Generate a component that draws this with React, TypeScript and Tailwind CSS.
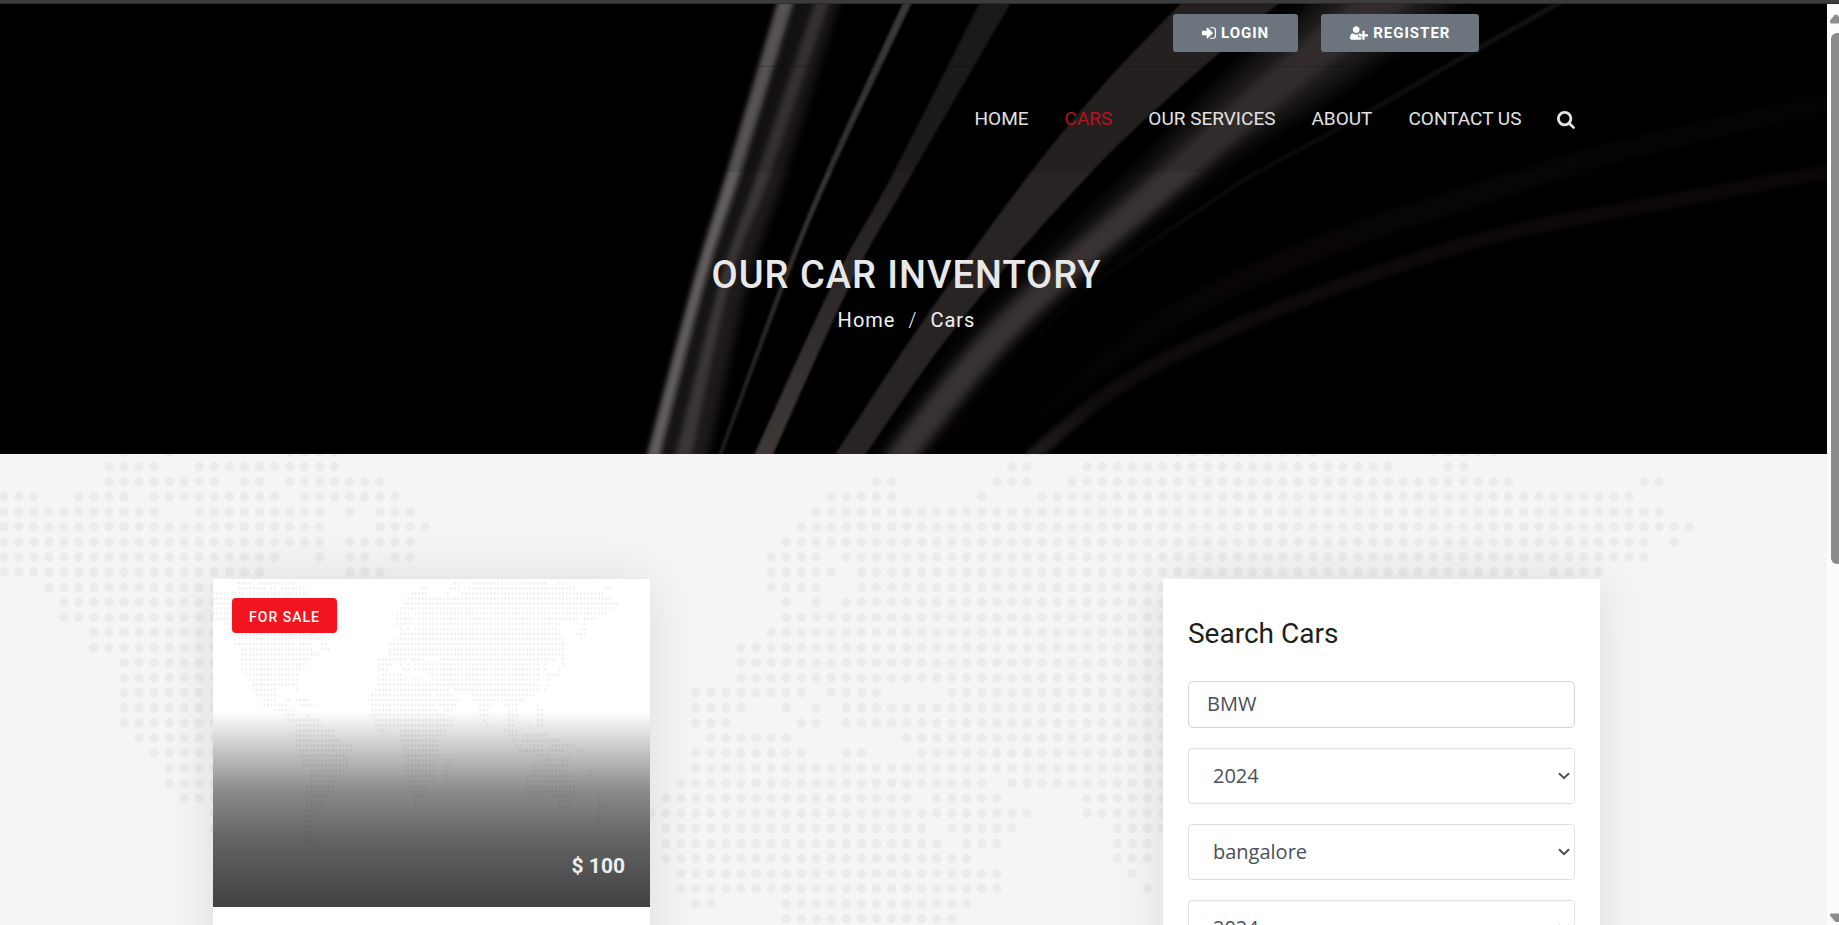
import React from "react";

/* Land cells of the dotted world map: one entry per row, "from-to" column ranges. */
const LAND_ROWS: string[] = [
  "8 11 19-22 68-69 78-87 95-99",
  "7-10 13-22 67-68 72-92 96-97",
  "7-14 16-17 19-25 58-59 66-68 71-100 109-110",
  "0-2 5-8 10-18 20-26 55-59 65 69-108",
  "0-10 13-21 23 25-27 54-110",
  "0-21 25-28 53-112",
  "0-21 23-27 52-109 111",
  "0-18 21 23-24 26-27 51-54 56-109",
  "0-17 23-25 51-55 57-101 103-106",
  "3-18 22-25 51-54 57-96 103",
  "4-19 22-27 52 54 56-95 102-103",
  "4-22 24-28 52-96 101-103",
  "6-22 24-30 51-97 102",
  "6-22 24-27 30-31 49-97",
  "8-27 30-32 49-97",
  "8-29 49-97",
  "8-26 46-53 55-58 63-95 97",
  "8-25 46-49 52 54 56-90 92 97",
  "8-24 46-48 53-54 56-90 92 96",
  "9-23 47-52 60-90 93-96",
  "10-23 46-53 56-57 61-90 93",
  "11-23 46-90 93",
  "11-17 23 45-65 67-90 92",
  "12-17 44-60 62-66 72-89",
  "14-17 20-21 23-26 43-68 72-86",
  "14-20 24-28 44-61 63-67 74-77 81-84 90",
  "17-22 44-62 64-66 74-76 82-84 90-91",
  "20-22 26 44-64 74-76 82-84 90-91",
  "21-29 45-66 75 82-83 90-91",
  "23-30 45-66 76 82-83 88 90-91",
  "23-33 46-47 52-64 81-84",
  "23-33 52-63 82-84 86-92",
  "23-35 52-62 83-84 86-96",
  "23-38 53-62 84-85 89-91 94-100",
  "24-38 53-62 85-91 93-97 101-102",
  "24-37 53-62 90-91 93 99",
  "25-37 54-62 65-66 91-94 97-98",
  "25-37 53-61 64-65 89-98",
  "27-36 53-61 64-65 89-98 104-105",
  "27-36 54-61 64-65 87-100 104-105",
  "27-34 54-61 65 87-100",
  "26-33 54-59 87-100",
  "26-33 55-59 88-100",
  "26-31 56-58 88-90 94-100 107",
  "26-31 56-57 96-99 107-108",
  "26-30 56 96-99 107-109",
  "25-29 56 98 107-108",
  "25-28 106-107",
  "25-27 106-107",
  "25-27",
  "25-26",
  "25-27",
  "26-28",
  "28",
];

const DOT_PATH = LAND_ROWS.map((row, r) =>
  row
    .split(" ")
    .map((range) => {
      const [from, to = from] = range.split("-").map(Number);
      let d = "";
      for (let c = from; c <= to; c++) {
        const x = (3.6 + c * 15.05 - 4.7).toFixed(1);
        const y = (-2.4 + r * 15.07).toFixed(1);
        d += `M${x} ${y}a4.7 4.7 0 1 0 9.4 0a4.7 4.7 0 1 0-9.4 0z`;
      }
      return d;
    })
    .join(""),
).join("");

function DotMap({ className, stretch }: { className: string; stretch?: boolean }) {
  return (
    <svg
      aria-hidden="true"
      viewBox="0 0 1827 975"
      preserveAspectRatio={stretch ? "none" : "xMidYMin meet"}
      className={className}
    >
      <path d={DOT_PATH} fill="currentColor" />
    </svg>
  );
}

type Point = [number, number];

/* Smooth curve segments through the points (Catmull-Rom turned into cubic Béziers). */
function curve(pts: Point[]): string {
  let d = `${pts[0][0]} ${pts[0][1]}`;
  for (let i = 0; i < pts.length - 1; i++) {
    const p0 = pts[i - 1] ?? pts[i];
    const p1 = pts[i];
    const p2 = pts[i + 1];
    const p3 = pts[i + 2] ?? p2;
    d += `C${p1[0] + (p2[0] - p0[0]) / 6} ${p1[1] + (p2[1] - p0[1]) / 6} ${p2[0] - (p3[0] - p1[0]) / 6} ${p2[1] - (p3[1] - p1[1]) / 6} ${p2[0]} ${p2[1]}`;
  }
  return d;
}

/* Closed band given as [y, left, right] stations from top to bottom. */
function band(stations: [number, number, number][]): string {
  const left = stations.map(([y, l]): Point => [l, y]);
  const right = stations.map(([y, , r]): Point => [r, y]).reverse();
  return `M${curve(left)}L${curve(right)}Z`;
}

function Blur({ id, amount }: { id: string; amount: number }) {
  return (
    <filter id={id} x="-20%" y="-10%" width="140%" height="120%" colorInterpolationFilters="sRGB">
      <feGaussianBlur stdDeviation={amount} />
    </filter>
  );
}

function HeroBeams() {
  return (
    <svg
      aria-hidden="true"
      viewBox="0 0 1827 450"
      preserveAspectRatio="xMidYMid slice"
      className="absolute inset-0 h-full w-full"
    >
      <defs>
        <Blur id="b1" amount={1.2} />
        <Blur id="b2" amount={2.5} />
        <Blur id="b4" amount={5} />
        <Blur id="b9" amount={10} />
        <linearGradient id="gd" x1="0" y1="0" x2="0" y2="1">
          <stop offset="0" stopColor="#1c1c1a" />
          <stop offset=".4" stopColor="#231f1e" />
          <stop offset="1" stopColor="#3f3938" />
        </linearGradient>
        <linearGradient id="gc" x1="0" y1="0" x2="0" y2="1">
          <stop offset="0" stopColor="#44403c" />
          <stop offset=".5" stopColor="#32322f" />
          <stop offset="1" stopColor="#1c1c1b" />
        </linearGradient>
        <linearGradient id="gg" x1="0" y1="1" x2="1" y2="0">
          <stop offset="0" stopColor="#000000" />
          <stop offset=".6" stopColor="#0d0d0d" />
          <stop offset="1" stopColor="#171616" />
        </linearGradient>
        <linearGradient id="gh" x1="0" y1="1" x2="1" y2="0">
          <stop offset="0" stopColor="#020101" />
          <stop offset=".4" stopColor="#0a0607" />
          <stop offset="1" stopColor="#060506" />
        </linearGradient>
        <linearGradient id="gi" x1="0" y1="1" x2="1" y2="0">
          <stop offset="0" stopColor="#211d1d" />
          <stop offset=".15" stopColor="#100c0d" />
          <stop offset="1" stopColor="#0b0709" />
        </linearGradient>
      </defs>
      {/* left pair with the dark panel between them */}
      <path d={band([[-10, 790, 825], [168, 740, 766], [279, 704, 726], [460, 656, 684]])} fill="#151514" filter="url(#b1)" />
      <path d={band([[-10, 815, 842], [168, 758, 786], [279, 720, 748], [460, 671, 706]])} fill="#1d1a19" filter="url(#b4)" />
      <path d={band([[-10, 818, 832], [168, 758, 771], [279, 720, 730], [460, 674, 690]])} fill="#3b3635" filter="url(#b2)" />
      <path d={band([[-10, 780, 796], [168, 727, 741], [279, 693, 705], [460, 645, 658]])} fill="#625d5c" filter="url(#b2)" />
      {/* thin streak */}
      <path d={band([[-10, 907, 916], [168, 826, 832], [279, 781, 786], [460, 715, 719]])} fill="url(#gc)" filter="url(#b1)" />
      {/* narrow band */}
      <path d={band([[-10, 984, 1016], [168, 894, 913], [279, 833, 851], [460, 750, 769]])} fill="url(#gd)" filter="url(#b1)" />
      {/* wide band */}
      <path
        d={band([[-10, 1190, 1290], [80, 1104, 1184], [176, 1025, 1084], [323, 919, 956], [460, 829, 859]])}
        fill="#282423"
        filter="url(#b1)"
      />
      {/* soft wide highlight */}
      <path
        d={band([[-15, 1330, 1470], [80, 1224, 1340], [176, 1132, 1196], [323, 984, 1026], [460, 880, 910]])}
        fill="#211e1d"
        filter="url(#b9)"
      />
      <path
        d={band([[-15, 1365, 1430], [80, 1254, 1304], [176, 1150, 1190], [323, 990, 1024], [460, 880, 910]])}
        fill="#383332"
        filter="url(#b4)"
      />
      {/* faint arcs on the right */}
      <path
        d={`M${curve([[1575, -10], [1446, 63], [1358, 114], [1258, 168], [1214, 196], [1074, 296], [980, 400]])}`}
        fill="none"
        stroke="url(#gg)"
        strokeWidth="5"
        filter="url(#b1)"
      />
      <path
        d={`M${curve([[1840, 96], [1599, 152], [1491, 186], [1350, 232], [1210, 292], [1114, 352], [1027, 422]])}`}
        fill="none"
        stroke="url(#gh)"
        strokeWidth="22"
        filter="url(#b4)"
      />
      <path
        d={`M${curve([[1840, 165], [1671, 197], [1511, 228], [1370, 271], [1210, 334], [1110, 388], [1028, 456]])}`}
        fill="none"
        stroke="url(#gi)"
        strokeWidth="14"
        filter="url(#b2)"
      />
    </svg>
  );
}

function SignInIcon() {
  return (
    <svg aria-hidden="true" viewBox="0 0 1536 1280" className="h-3 w-3.5 fill-current">
      <path d="M1184 640q0 26-19 45L621 1229q-19 19-45 19t-45-19-19-45V896H64q-26 0-45-19T0 832V448q0-26 19-45t45-19h448V96q0-26 19-45t45-19 45 19l544 544q19 19 19 45zm352-352v704q0 119-84.500 203.500T1248 1280H928q-13 0-22.500-9.500T896 1248q0-4-1-20t-.5-26.500 3-23.500 10-19.500 20.500-6.500h320q66 0 113-47t47-113V288q0-66-47-113t-113-47H936l-11.500-1-11.500-3-8-5.500-7-9-2-13.500q0-4-1-20t-.5-26.500 3-23.500 10-19.500T928 0h320q119 0 203.500 84.500T1536 288z" />
    </svg>
  );
}

function UserPlusIcon() {
  return (
    <svg aria-hidden="true" viewBox="0 0 2048 1536" className="h-3.5 w-[18px] fill-current">
      <path d="M704 768q-159 0-271.500-112.500T320 384t112.500-271.500T704 0t271.500 112.500T1088 384 975.500 655.500 704 768zm960 128h352q13 0 22.500 9.500t9.500 22.500v192q0 13-9.500 22.500t-22.500 9.500h-352v352q0 13-9.500 22.500t-22.500 9.500h-192q-13 0-22.500-9.500t-9.500-22.500v-352h-352q-13 0-22.500-9.500T1024 1120V928q0-13 9.500-22.500T1056 896h352V544q0-13 9.500-22.500t22.500-9.500h192q13 0 22.500 9.500t9.500 22.500v352zm-736 224q0 52 38 90t90 38h256v238q-68 50-171 50H267q-121 0-194-69T0 1376q0-53 3.500-103.500t14-109T44 1055t43-97.500 62-81 85.500-53.500T346 803q19 0 39 17 79 61 154.500 91.500T704 942t164.500-30.500T1023 820q20-17 39-17 132 0 217 96h-223q-52 0-90 38t-38 90v192z" />
    </svg>
  );
}

function SearchIcon() {
  return (
    <svg aria-hidden="true" viewBox="0 0 1664 1664" className="h-[18px] w-[18px] fill-current">
      <path d="M1152 704q0-185-131.500-316.500T704 256 387.500 387.500 256 704t131.500 316.500T704 1152t316.500-131.500T1152 704zm512 832q0 52-38 90t-90 38q-54 0-90-38l-343-342q-179 124-399 124-143 0-273.500-55.500t-225-150-150-225T0 704t55.500-273.500 150-225 225-150T704 0t273.500 55.500 225 150 150 225T1408 704q0 220-124 399l343 343q37 37 37 90z" />
    </svg>
  );
}

const NAV = ["Home", "Cars", "Our Services", "About", "Contact Us"];

function Header() {
  const btn =
    "flex h-[38px] items-center gap-[5px] rounded-[3px] bg-[#6c757d] px-[29px] text-[15px] font-bold tracking-[1px] text-white uppercase";
  return (
    <header className="relative bg-black/10">
      <div className="border-b border-black/20 pr-[14px]">
        <div className="mx-auto flex h-[62px] w-[76%] items-start justify-end gap-[23px] pt-[10px] pr-[116px]">
          <button type="button" className={btn}><SignInIcon />Login</button>
          <button type="button" className={btn}><UserPlusIcon />Register</button>
        </div>
      </div>
      <div className="pr-[14px]">
        <nav className="mx-auto flex h-[105px] w-[76%] items-center justify-end gap-9 pr-5 text-[19px] text-[#e2e2e2] uppercase">
          {NAV.map((item) => (
            <a key={item} href="#" className={item === "Cars" ? "text-[#b8131c]" : ""}>{item}</a>
          ))}
          <button type="button" aria-label="Search"><SearchIcon /></button>
        </nav>
      </div>
    </header>
  );
}

function CarCard() {
  return (
    <article className="bg-white shadow-[0_0_50px_rgba(0,0,0,0.1)]">
      <div className="relative h-[328px]">
        <DotMap stretch className="absolute inset-0 h-full w-full text-[#f1f1f2]" />
        <div className="absolute inset-x-0 bottom-0 h-[196px] bg-[linear-gradient(to_bottom,rgba(0,0,0,0)_0%,rgba(0,0,0,0.46)_41%,rgba(0,0,0,0.61)_66%,rgba(4,0,2,0.75)_100%)]" />
        <span className="absolute top-[19px] left-[19px] flex h-[35px] items-center rounded-[4px] bg-[#f41420] px-[17px] pt-[3px] text-[14px] font-medium tracking-[1px] text-white uppercase">
          For sale
        </span>
        <span className="absolute right-[25px] bottom-[27px] text-[21px] leading-7 font-bold text-[#eeeeee]">$ 100</span>
      </div>
      <div className="h-40" />
    </article>
  );
}

function SelectField({ label, value }: { label: string; value: string }) {
  return (
    <div className="relative">
      <select
        aria-label={label}
        defaultValue={value}
        className="block h-14 w-full appearance-none rounded-[4px] border border-[#dfe0e2] bg-white pr-8 pl-6 text-[20px] text-[#495057]"
      >
        <option>{value}</option>
      </select>
      <svg
        aria-hidden="true"
        viewBox="0 0 12 8"
        className="pointer-events-none absolute top-6 right-[5px] h-2 w-3 fill-none stroke-[#495057] stroke-2"
      >
        <path d="M1 1.200L6 6.200L11 1.200" />
      </svg>
    </div>
  );
}

function SearchCard() {
  return (
    <aside className="col-start-3 bg-white px-[25px] pt-[37px] shadow-[0_0_50px_rgba(0,0,0,0.1)]">
      <h2 className="text-[28px] leading-9 text-[#1d1f21]">Search Cars</h2>
      <form className="mt-[29px] flex flex-col gap-5 pb-8 font-['Open_Sans',sans-serif]">
        <input
          type="text"
          aria-label="Car brand"
          defaultValue="BMW"
          className="h-[47px] w-full rounded-[5px] border border-[#ced4da] bg-white px-[18px] pb-[2px] text-[20px] text-[#495057]"
        />
        <SelectField label="Year" value="2024" />
        <SelectField label="City" value="bangalore" />
        <SelectField label="Model" value="2024" />
      </form>
    </aside>
  );
}

function Scrollbar() {
  return (
    <div aria-hidden="true" className="flex w-3 shrink-0 flex-col items-end overflow-hidden bg-[#fcfcfc]">
      <svg viewBox="0 0 9 10" className="mt-[10px] h-[10px] w-[9px] fill-[#8b8b8b]">
        <path d="M0 8Q0 7 .5 6L4.500 1Q6 0 7.500 1L9 3V9.500H1Q0 9.500 0 8Z" />
      </svg>
      <div className="mt-[9px] h-[531px] w-2 rounded-l-[6px] bg-[#8b8b8b]" />
      <svg viewBox="0 0 9 10" className="mt-auto mb-[2px] h-[10px] w-[9px] fill-[#8b8b8b]">
        <path d="M0 1.500Q0 .5 1 .5H9V9H6.500Q5.500 9 4.500 8L.5 3Q0 2.500 0 1.500Z" />
      </svg>
    </div>
  );
}

export default function App() {
  return (
    <div className="flex h-screen flex-col overflow-hidden font-[Roboto,sans-serif]">
      <div className="h-1 shrink-0 border-b border-[#2b2b2b] bg-[#3c3c3c]" />
      <div className="flex min-h-0 flex-1">
        <main className="flex min-w-0 flex-1 flex-col overflow-hidden">
          <section className="relative h-[450px] shrink-0 overflow-hidden bg-black">
            <HeroBeams />
            <Header />
            <div className="relative pt-[81px] pr-[14px] text-center">
              <h1 className="text-[38px] leading-[44px] font-medium tracking-[1px] text-[#e8e8e8] uppercase">
                Our Car Inventory
              </h1>
              <p className="mt-[11px] flex justify-center gap-[13px] text-[20px] leading-6 tracking-[1px] text-[#f2f2f2]">
                <a href="#">Home</a>
                <span className="font-light">/</span>
                <a href="#">Cars</a>
              </p>
            </div>
          </section>
          <section className="relative flex-1 overflow-hidden bg-[#f5f5f5] pr-[14px]">
            <DotMap className="absolute top-0 left-0 w-full text-[#e9ebec]" />
            <div className="relative mx-auto grid w-[76.5%] grid-cols-3 items-start gap-[38px] pt-[125px]">
              <CarCard />
              <SearchCard />
            </div>
          </section>
        </main>
        <Scrollbar />
      </div>
    </div>
  );
}
